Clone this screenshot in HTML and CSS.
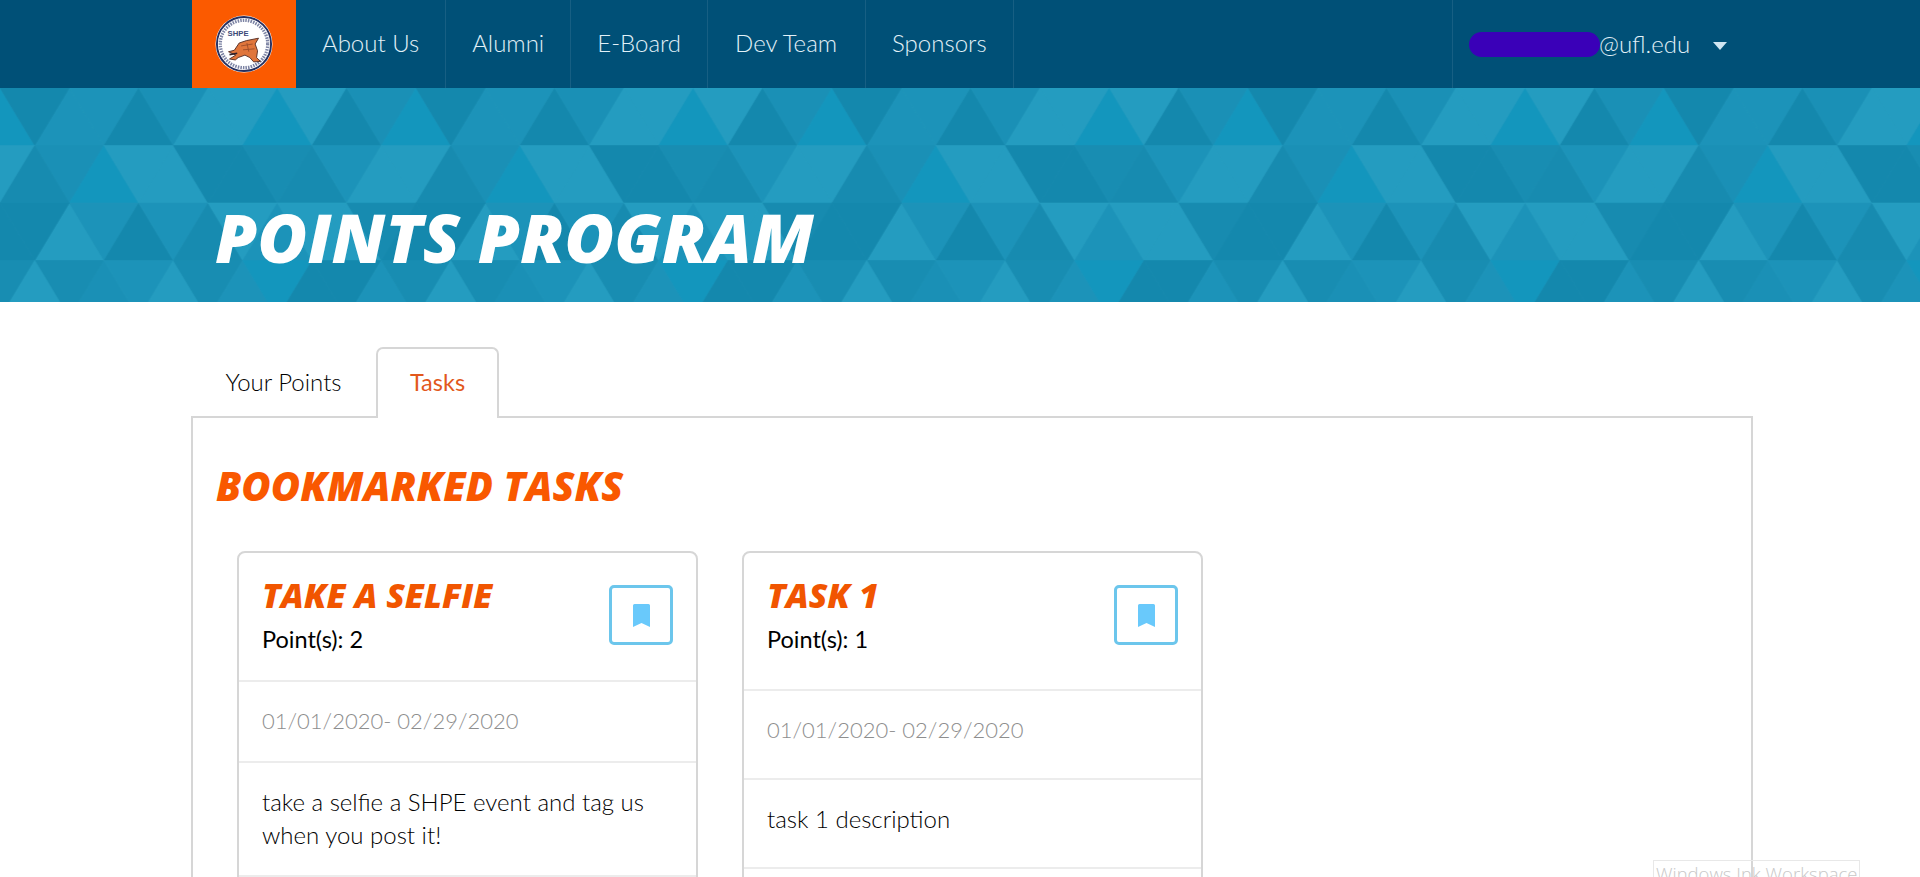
FILE: index.html
```html
<!DOCTYPE html>
<html lang="en">
<head>
<meta charset="utf-8">
<title>Points Program</title>
<link rel="stylesheet" href="styles.css">
</head>
<body>
<nav class="nav">
  <a class="brand" href="#">
    <svg class="logo" viewBox="0 0 60 60" aria-hidden="true">
      <circle cx="30" cy="30" r="29.5" fill="#fff"/>
      <circle cx="30" cy="30" r="28" fill="none" stroke="#27305f" stroke-width="2"/>
      <circle cx="30" cy="30" r="24.5" fill="none" stroke="#7d84a4" stroke-width="3.4" stroke-dasharray="1.6 1.1"/>
      <circle cx="30" cy="30" r="22.4" fill="#fff"/>
      <text class="logo-text" x="13" y="21.7">SHPE</text>
      <path d="M14 38 20 36.5 25 29 32.5 26.5 45 24 41.5 30 44 37 43 44 47 48 40 48.5 36 44 31 41.5 24 44 21 46.5 15 45.5 21.5 41.5Z" fill="#e0763c" stroke="#5b3328" stroke-width="1"/>
      <path d="M15 41 23 39.5" fill="none" stroke="#33222a" stroke-width="1.6"/>
      <path d="M27 32 39 30M29 36 41 35M33 29l2 9" fill="none" stroke="#9a4b28" stroke-width=".9"/>
    </svg>
  </a>
  <a class="nav-link" href="#">About Us</a>
  <a class="nav-link" href="#">Alumni</a>
  <a class="nav-link" href="#">E-Board</a>
  <a class="nav-link nav-link-wide" href="#">Dev Team</a>
  <a class="nav-link" href="#">Sponsors</a>
  <div class="user">
    <span class="redaction"></span><span class="email">@ufl.edu</span>
    <svg class="caret" viewBox="0 0 14 8" aria-hidden="true"><path d="M0 0h14L7 8Z"/></svg>
  </div>
</nav>

<header class="hero">
  <svg class="hero-bg" aria-hidden="true">
    <defs>
      <pattern id="tri" patternUnits="userSpaceOnUse" x="34.7" y="0" width="416" height="230">
        <g id="tile">
          <rect class="m" width="416" height="230"/>
          <!-- row 1 -->
          <polygon class="e" points="0,57.5 34.67,0 69.33,57.5"/>
          <polygon class="e" points="34.67,0 104,0 69.33,57.5"/>
          <polygon class="d" points="69.33,57.5 104,0 138.67,57.5"/>
          <polygon class="m" points="104,0 173.33,0 138.67,57.5"/>
          <polygon class="a" points="138.67,57.5 173.33,0 208,57.5"/>
          <polygon class="a" points="173.33,0 242.67,0 208,57.5"/>
          <polygon class="b" points="208,57.5 242.67,0 277.33,57.5"/>
          <polygon class="a" points="242.67,0 312,0 277.33,57.5"/>
          <polygon class="d" points="277.33,57.5 312,0 346.67,57.5"/>
          <polygon class="m" points="312,0 381.33,0 346.67,57.5"/>
          <polygon class="b" points="346.67,57.5 381.33,0 416,57.5"/>
          <polygon class="d" points="381.33,0 450.67,0 416,57.5"/>
          <!-- row 2 -->
          <polygon class="m" points="0,57.5 69.33,57.5 34.67,115"/>
          <polygon class="b" points="34.67,115 69.33,57.5 104,115"/>
          <polygon class="a" points="69.33,57.5 138.67,57.5 104,115"/>
          <polygon class="a" points="104,115 138.67,57.5 173.33,115"/>
          <polygon class="d" points="138.67,57.5 208,57.5 173.33,115"/>
          <polygon class="d" points="173.33,115 208,57.5 242.67,115"/>
          <polygon class="f" points="208,57.5 277.33,57.5 242.67,115"/>
          <polygon class="g" points="242.67,115 277.33,57.5 312,115"/>
          <polygon class="e" points="277.33,57.5 346.67,57.5 312,115"/>
          <polygon class="a" points="312,115 346.67,57.5 381.33,115"/>
          <polygon class="a" points="346.67,57.5 416,57.5 381.33,115"/>
          <polygon class="g" points="381.33,115 416,57.5 450.67,115"/>
          <!-- row 3 -->
          <polygon class="a" points="0,172.5 34.67,115 69.33,172.5"/>
          <polygon class="e" points="34.67,115 104,115 69.33,172.5"/>
          <polygon class="d" points="69.33,172.5 104,115 138.67,172.5"/>
          <polygon class="e" points="104,115 173.33,115 138.67,172.5"/>
          <polygon class="g" points="138.67,172.5 173.33,115 208,172.5"/>
          <polygon class="a" points="173.33,115 242.67,115 208,172.5"/>
          <polygon class="e" points="208,172.5 242.67,115 277.33,172.5"/>
          <polygon class="a" points="242.67,115 312,115 277.33,172.5"/>
          <polygon class="a" points="277.33,172.5 312,115 346.67,172.5"/>
          <polygon class="g" points="312,115 381.33,115 346.67,172.5"/>
          <polygon class="d" points="346.67,172.5 381.33,115 416,172.5"/>
          <polygon class="d" points="381.33,115 450.67,115 416,172.5"/>
          <!-- row 4 -->
          <polygon class="f" points="0,172.5 69.33,172.5 34.67,230"/>
          <polygon class="m" points="34.67,230 69.33,172.5 104,230"/>
          <polygon class="e" points="69.33,172.5 138.67,172.5 104,230"/>
          <polygon class="a" points="104,230 138.67,172.5 173.33,230"/>
          <polygon class="f" points="138.67,172.5 208,172.5 173.33,230"/>
          <polygon class="e" points="173.33,230 208,172.5 242.67,230"/>
          <polygon class="b" points="208,172.5 277.33,172.5 242.67,230"/>
          <polygon class="d" points="242.67,230 277.33,172.5 312,230"/>
          <polygon class="d" points="277.33,172.5 346.67,172.5 312,230"/>
          <polygon class="e" points="312,230 346.67,172.5 381.33,230"/>
          <polygon class="f" points="346.67,172.5 416,172.5 381.33,230"/>
          <polygon class="a" points="381.33,230 416,172.5 450.67,230"/>
        </g>
        <use href="#tile" x="-416"/>
      </pattern>
    </defs>
    <rect class="hero-fill" width="100%" height="100%"/>
  </svg>
  <h1 class="hero-title">POINTS PROGRAM</h1>
</header>

<main class="content">
  <div class="tabs">
    <a class="tab" href="#">Your Points</a>
    <a class="tab tab-active" href="#">Tasks</a>
  </div>
  <section class="panel">
    <h2 class="section-title">BOOKMARKED TASKS</h2>
    <div class="cards">
      <article class="card card-long">
        <div class="card-head">
          <div>
            <h3 class="card-title">TAKE A SELFIE</h3>
            <p class="points">Point(s): 2</p>
          </div>
          <button class="bookmark" type="button" aria-label="Bookmark">
            <svg viewBox="0 0 17 23" aria-hidden="true"><path d="M1.5 0h14A1.5 1.5 0 0 1 17 1.5V23l-8.5-4L0 23V1.5A1.5 1.5 0 0 1 1.5 0Z"/></svg>
          </button>
        </div>
        <div class="card-date">01/01/2020- 02/29/2020</div>
        <div class="card-desc">take a selfie a SHPE event and tag us when you post it!</div>
      </article>
      <article class="card card-short">
        <div class="card-head">
          <div>
            <h3 class="card-title">TASK 1</h3>
            <p class="points">Point(s): 1</p>
          </div>
          <button class="bookmark" type="button" aria-label="Bookmark">
            <svg viewBox="0 0 17 23" aria-hidden="true"><path d="M1.5 0h14A1.5 1.5 0 0 1 17 1.5V23l-8.5-4L0 23V1.5A1.5 1.5 0 0 1 1.5 0Z"/></svg>
          </button>
        </div>
        <div class="card-date">01/01/2020- 02/29/2020</div>
        <div class="card-desc">task 1 description</div>
      </article>
    </div>
  </section>
</main>

<div class="ink">Windows Ink Workspace</div>
</body>
</html>
```

FILE: styles.css
```css
* { box-sizing: border-box; }
html, body { margin: 0; height: 877px; overflow: hidden; background: #fff; }
body { font-family: "Lato", "Noto Sans", sans-serif; font-weight: 300; color: #000; position: relative; }
a { text-decoration: none; color: inherit; }
h1, h2, h3, p { margin: 0; }

.nav { height: 88px; background: #005077; padding-left: 192px; display: flex; align-items: stretch; color: #e2f1f8; font-size: 24px; }
.brand { width: 104px; background: #fb5a00; display: flex; align-items: center; justify-content: center; }
.logo { width: 58px; height: 58px; display: block; }
.logo-text { font: 700 8px "Liberation Sans", sans-serif; fill: #3c4a78; }
.nav-link { display: flex; align-items: center; padding: 0 26px 4px; border-right: 1px solid rgba(255,255,255,.09); }
.nav-link-wide { padding-left: 27px; padding-right: 28px; }
.user { margin-left: auto; margin-right: 168px; width: 300px; display: flex; align-items: center; padding-left: 16px; border-left: 1px solid rgba(255,255,255,.09); }
.redaction { width: 131px; height: 25px; background: #3a00b8; border-radius: 13px; margin-top: 1px; }
.email { margin-left: -1px; padding-bottom: 2px; }
.caret { width: 14px; height: 8px; margin-left: 23px; margin-top: 3px; fill: #cfe6f2; }

.hero { height: 214px; position: relative; overflow: hidden; background: #1a90b6; padding: 109px 0 0 215px; }
.hero-bg { position: absolute; left: 0; top: 0; width: 100%; height: 100%; }
.hero-fill { fill: url(#tri); }
.hero-bg polygon, .hero-bg rect { stroke-width: .6; }
.a { fill: #249cc0; stroke: #249cc0; }
.b { fill: #1396bd; stroke: #1396bd; }
.d { fill: #1488ad; stroke: #1488ad; }
.e { fill: #1c93b9; stroke: #1c93b9; }
.f { fill: #188db2; stroke: #188db2; }
.g { fill: #178bb0; stroke: #178bb0; }
.m { fill: #1a90b6; stroke: #1a90b6; }
.hero-title { position: relative; font: italic 800 68px/80px "Open Sans", sans-serif; color: #fff; white-space: nowrap; }

.content { padding: 45px 167px 0 191px; }
.tabs { display: flex; height: 71px; font-size: 24px; position: relative; z-index: 1; margin-bottom: -2px; }
.tab { width: 185px; display: flex; align-items: center; justify-content: center; padding-bottom: 2px; }
.tab-active { width: 123px; color: #e2581c; font-size: 23.5px; font-weight: 400; background: #fff; border: 2px solid #d6d6d6; border-bottom: 0; border-radius: 7px 7px 0 0; padding-bottom: 4px; }
.panel { border: 2px solid #d6d6d6; border-bottom: 0; height: 520px; padding: 40px 23px 0; }
.section-title { font: italic 800 40px/56px "Open Sans", sans-serif; color: #f95800; white-space: nowrap; }
.cards { display: flex; gap: 44px; margin: 37px 0 0 21px; }
.card { width: 461px; border: 2px solid #d6d6d6; border-radius: 8px; height: 400px; }
.card-head { display: flex; justify-content: space-between; align-items: flex-start; padding: 20px 23px 0; border-bottom: 2px solid #ececec; }
.card-long .card-head { height: 129px; }
.card-short .card-head { height: 138px; }
.card-title { font: italic 800 34px/44px "Open Sans", sans-serif; color: #f15500; white-space: nowrap; }
.points { font-size: 23.5px; font-weight: 400; line-height: 30px; color: #000; margin-top: 7px; }
.bookmark { width: 64px; height: 60px; margin-top: 12px; background: #fff; border: 3px solid #6cc6ec; border-radius: 5px; display: flex; align-items: center; justify-content: center; padding: 0; }
.bookmark svg { width: 17px; height: 23px; fill: #69c9fb; }
.card-date { display: flex; align-items: center; padding: 0 23px; color: #8e8e8e; font-size: 22px; border-bottom: 2px solid #ececec; }
.card-long .card-date { height: 81px; padding-bottom: 2px; }
.card-short .card-date { height: 89px; padding-bottom: 10px; }
.card-desc { padding: 22px 23px 0; font-size: 24px; line-height: 33px; border-bottom: 2px solid #ececec; }
.card-long .card-desc { height: 114px; }
.card-short .card-desc { height: 89px; }

.ink { position: absolute; left: 1653px; top: 860px; width: 207px; height: 30px; border: 1px solid #e8e8e8; color: #c8c8c8; font: 300 18.5px/26px "Open Sans", sans-serif; padding-left: 2px; white-space: nowrap; }
```
